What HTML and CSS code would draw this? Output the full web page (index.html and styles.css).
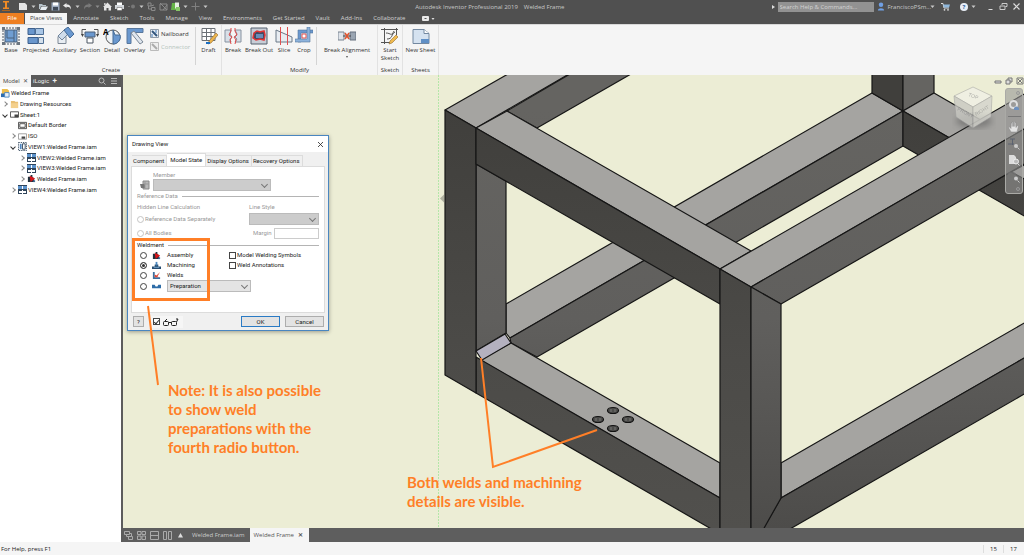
FILE: index.html
```html
<!DOCTYPE html>
<html lang="en">
<head>
    <meta charset="utf-8">
    <title>Autodesk Inventor Professional 2019 - Welded Frame</title>
    <link rel="stylesheet" href="styles.css">
</head>
<body>
    <!-- shared icons -->
    <svg class="defs" width="0" height="0">
        <symbol id="caret" viewBox="0 0 5 4"><path d="M0.5 0.5h4L2.5 3z" fill="#c8c8c8"/></symbol>
        <symbol id="views" viewBox="0 0 9 9">
            <path d="M0 0h4v4H0zM5 0h4v4H5z" fill="#5d93cc"/>
            <path d="M0 5h4v4H0zM5 5h4v4H5z" fill="#2f445a"/>
            <path d="M1 6h3v2H1zM5 6h3v2H5z" fill="#fff"/>
            <path d="M0 0h9v1H0zM0 4h9v1H0z" fill="#2f445a"/>
        </symbol>
        <symbol id="assembly" viewBox="0 0 10 10">
            <path d="M1 3h3V1h2v2l2 2v4H1z" fill="#22303c"/>
            <path d="M3 2l6 3-5 4z" fill="#d8161b"/>
            <path d="M7 7h2v2H7z" fill="#3f6f9d"/>
        </symbol>
    </svg>

    <header class="titlebar">
        <svg class="logo" viewBox="0 0 10 13"><path d="M2 1h6v1.500H6v5h2V9H2V7.500h2v-5H2z" fill="#f08a24"/><path d="M1 10.500h8" stroke="#a86220" stroke-width="1"/></svg>
        <div class="quick">
            <button aria-label="New"><svg viewBox="0 0 9 9"><path d="M0 1h6l2 2v5H0z" fill="#e4e4e4"/></svg></button>
            <svg class="caret"><use href="#caret"/></svg>
            <button aria-label="Open"><svg viewBox="0 0 9 9"><path d="M0 2h3l1 1h3v1H2L1 7H0z" fill="#b8c4cc"/><path d="M2.500 4.500H9L7 8H1z" fill="#e8eef2"/></svg></button>
            <button aria-label="Save"><svg viewBox="0 0 9 9"><path d="M0.500 0.500h8v8h-8z" fill="#9eacc0"/><path d="M2 0.500h5v3H2z" fill="#fff"/><path d="M2 5h5v3.500H2z" fill="#404a58"/></svg></button>
            <button aria-label="Undo"><svg viewBox="0 0 9 9"><path d="M0 3.500L3.500 1v1.500C7 2.500 8 4.500 8 7.500 7 5.500 6 4.800 3.500 4.800V6z" fill="#e8e8e8"/></svg></button>
            <svg class="caret"><use href="#caret"/></svg>
            <button aria-label="Redo"><svg viewBox="0 0 9 9"><path d="M9 3.500L5.500 1v1.500C2 2.500 1 4.500 1 7.500 2 5.500 3 4.800 5.500 4.800V6z" fill="#7a7a7a"/></svg></button>
            <svg class="caret dim"><use href="#caret"/></svg>
            <button aria-label="Home"><svg viewBox="0 0 9 9"><path d="M0 5l4.500-4.500L9 5H8v3.500H5.500V6h-2v2.500H1V5z" fill="#e4e4e4"/><path d="M1.200 1h1.300v2H1.200z" fill="#e4e4e4"/></svg></button>
            <button aria-label="Print"><svg viewBox="0 0 9 9"><path d="M2 0.500h5V3H2z" fill="#fff"/><path d="M0 3h9v4H0z" fill="#d4d8dc"/><path d="M2 5.500h5v3H2z" fill="#fff" stroke="#555" stroke-width=".5"/></svg></button>
            <button aria-label="Select"><svg viewBox="0 0 9 9"><circle cx="6" cy="4.500" r="2" fill="#777"/><path d="M1 4.500h2" stroke="#777"/></svg></button>
            <svg class="caret"><use href="#caret"/></svg>
            <button aria-label="Update"><svg viewBox="0 0 9 9" fill="none" stroke="#8a8a8a"><path d="M1 1h3v3H1zM4 4l3-1M4.500 5.500h3.500v3H4.500zM1.500 4v3h3"/></svg></button>
            <button aria-label="Update all"><svg viewBox="0 0 9 9" fill="none" stroke="#8a8a8a"><path d="M1 2h7v6H1zM1 1l7 7M8 3L4 8"/></svg></button>
            <button aria-label="Sheet"><svg viewBox="0 0 9 9"><path d="M1 1h5v7H0z" fill="#65b447"/><path d="M4 0.500h4v6H4z" fill="#e6efe2"/><path d="M5 5h4v4H5z" fill="#86c667"/></svg></button>
            <svg class="caret"><use href="#caret"/></svg>
            <button aria-label="Add"><svg viewBox="0 0 9 9"><path d="M4.500 0.500v8M0.500 4.500h8" stroke="#808080"/></svg></button>
            <svg class="caret"><use href="#caret"/></svg>
        </div>
        <div class="app-title"><span>Autodesk Inventor Professional 2019</span><span>Welded Frame</span></div>
        <div class="account">
            <svg class="play" viewBox="0 0 3 4"><path d="M0 0l3 2-3 2z" fill="#ddd"/></svg>
            <input class="help-search" type="text" placeholder="Search Help &amp; Commands..." aria-label="Search help and commands">
            <svg class="user" viewBox="0 0 9 10"><circle cx="4.500" cy="3" r="2.500" fill="#6f9fe4"/><path d="M1 9.500C1 6 8 6 8 9.500z" fill="#6f9fe4"/></svg>
            <span class="user-name">FranciscoPSm...</span>
            <svg class="caret"><use href="#caret"/></svg>
            <svg class="cart" viewBox="0 0 9 9"><path d="M0 1.500h2L3 6h5" fill="none" stroke="#ddd"/><path d="M2 2.500h7L8 5.500H3z" fill="#8fb8dc"/><circle cx="3.500" cy="7.800" r=".9" fill="#ddd"/><circle cx="7" cy="7.800" r=".9" fill="#ddd"/></svg>
            <span class="help-badge">?</span>
            <svg class="caret"><use href="#caret"/></svg>
        </div>
        <div class="win-buttons">
            <button aria-label="Minimize"><svg viewBox="0 0 9 9"><path d="M2.500 7.500h4" stroke="#ddd"/></svg></button>
            <button aria-label="Restore"><svg viewBox="0 0 9 9" fill="none" stroke="#ccc"><path d="M3 3V1.500h5v3H6.500M1 4h5v3.500H1z"/></svg></button>
            <button aria-label="Close"><svg viewBox="0 0 9 9"><path d="M1.500 1.500l6 6M7.500 1.500l-6 6" stroke="#ddd" stroke-width="1.200"/></svg></button>
        </div>
    </header>

    <nav class="ribbon-tabs">
        <button class="file">File</button>
        <button class="active">Place Views</button>
        <button>Annotate</button>
        <button>Sketch</button>
        <button>Tools</button>
        <button>Manage</button>
        <button>View</button>
        <button>Environments</button>
        <button>Get Started</button>
        <button>Vault</button>
        <button>Add-Ins</button>
        <button>Collaborate</button>
        <button class="toggle" aria-label="Ribbon display"><svg viewBox="0 0 13 5"><rect width="7" height="5" rx="1" fill="#e8e8e8"/><path d="M2.500 2.500h2" stroke="#555"/><path d="M9.500 2h3L11 4z" fill="#ddd"/></svg></button>
    </nav>

    <section class="ribbon">
        <div class="panel create">
            <div class="tools">
                <button class="tool w20"><svg viewBox="0 0 18 18"><path d="M1 1h16v16H1z" fill="none" stroke="#4c5560" stroke-dasharray="2 1"/><path d="M3 3h12v12H3z" fill="#6f9dd2" stroke="#4b617a"/><path d="M5 3v8h7v4M12 3v8" fill="none" stroke="#4b617a"/><path d="M0 0h3v3H0zM15 0h3v3h-3zM0 15h3v3H0zM15 15h3v3h-3z" fill="#6b7580"/></svg>Base</button>
                <button class="tool w30"><svg viewBox="0 0 18 18"><path d="M1 1.500h7v6H1z" fill="#6996cc" stroke="#3c5f8c"/><path d="M8.500 1.500h8v6h-8z" fill="#a9c6e6" stroke="#4f6f94"/><path d="M1 10.500h10v6H1z" fill="#6996cc" stroke="#3c5f8c"/><path d="M11.500 10.500h5v6h-5z" fill="#d4e0ec" stroke="#4f6f94"/></svg>Projected</button>
                <button class="tool w27"><svg viewBox="0 0 18 18"><path d="M2 9.500h8v7H2z" fill="#e8edf2" stroke="#7d8895"/><path d="M2 9l7-7 4 4-7 7z" fill="#cfdcea" stroke="#71859c"/><path d="M8 3l4-3 6 7-4 4z" fill="#6a98cf" stroke="#456b96"/></svg>Auxiliary</button>
                <button class="tool w24"><svg viewBox="0 0 18 18"><path d="M4 5h10v5H4z" fill="#6a98cf" stroke="#4a5f78"/><path d="M6 11h6v5H6z" fill="#fff" stroke="#4a5560"/><path d="M1 8V2.500h4M17 8V2.500h-4" fill="none" stroke="#555"/><path d="M0 7h3L1.500 10zM15 7h3l-1.500 3z" fill="#444"/></svg>Section</button>
                <button class="tool w20"><svg viewBox="0 0 18 18"><circle cx="10" cy="10" r="7" fill="#eef2f6" stroke="#555"/><path d="M10 3v14a7 7 0 0 0 7-9h-5z" fill="#6a98cf" stroke="#456b96"/><text class="icon-text" x="0" y="8">A</text></svg>Detail</button>
                <button class="tool w25"><svg viewBox="0 0 18 18"><path d="M1 1.500h16v4H5v11H1z" fill="#6a98cf" stroke="#58779c"/><path d="M5 6l3-2 9 11-3 2z" fill="#dfe6ee" stroke="#7a8796"/></svg>Overlay</button>
                <div class="small-tools">
                    <button><svg viewBox="0 0 9 9"><path d="M.5.5h8v8h-8z" fill="#e8eef4" stroke="#8e9aa8"/><path d="M2 2l5 5" stroke="#31547c" stroke-width="2"/><path d="M6 1v3M2 5v3" stroke="#4278b4"/></svg>Nailboard</button>
                    <button class="disabled"><svg viewBox="0 0 9 9"><path d="M.5.5h8v8h-8z" fill="#eee" stroke="#bbb"/><path d="M2 2l5 5" stroke="#aaa" stroke-width="2"/></svg>Connector</button>
                </div>
                <button class="tool w25 sep"><svg viewBox="0 0 18 18"><path d="M2 1.500h13v12H2zM2 5.500h13M2 9.500h13M6.500 1.500v12M11 1.500v12" fill="#fff" stroke="#6a6f75"/><path d="M9 14l7-8 2 2-7 8-3 1z" fill="#edb54c" stroke="#8d6730" stroke-width=".6"/><path d="M6 16h4" stroke="#1b6dc0" stroke-width="2"/></svg>Draft</button>
            </div>
            <div class="panel-name">Create</div>
        </div>
        <div class="panel">
            <div class="tools">
                <button class="tool w22"><svg viewBox="0 0 18 18"><path d="M1 3h6l-1 4 2 3-2 2 1 3H1zM17 3h-6l2 4-2 3 2 2-2 3h6z" fill="#d8e0e8" stroke="#8792a0"/><path d="M7 1v3L5 8l3 2-2 3 1 4M11 1v3l2 4-3 2 2 3-1 4" fill="none" stroke="#e04848"/></svg>Break</button>
                <button class="tool w30"><svg viewBox="0 0 18 18"><path d="M1 1h16v16H1z" fill="#c7cdd6" stroke="#55606e"/><path d="M4 6l3-2 3 1 4-1 1 4-1 5-4-1-4 1-3-2z" fill="#3c4c66" stroke="#e03434" stroke-width="1.500"/><path d="M6 7h7v4H6z" fill="#6a8db8"/></svg>Break Out</button>
                <button class="tool w20"><svg viewBox="0 0 18 18"><path d="M1 3l16 7v5H1z" fill="#e8edf2" stroke="#6b7888"/><path d="M5.500 0v18M12.500 0v18" stroke="#e05050"/></svg>Slice</button>
                <button class="tool w20"><svg viewBox="0 0 18 18"><path d="M3 3h15v3H6v9H3z" fill="#6a98cf" stroke="#55779c" stroke-width=".6"/><path d="M0 12h12V0h3v15H0z" fill="#8db3dc" stroke="#55779c" stroke-width=".6"/><path d="M7 7h4v4H7z" fill="#fff" stroke="#e05050"/></svg>Crop</button>
                <button class="tool align sep"><svg viewBox="0 0 18 18"><path d="M0 5h6v8H0z" fill="#dfe4ea" stroke="#7a8491"/><path d="M12 5h6v8h-6z" fill="#9aa5b2" stroke="#67717e"/><path d="M5 9h8" stroke="#444"/><path d="M7 6l4 6M11 6l-4 6" stroke="#e0532e" stroke-width="1.500"/></svg>Break Alignment<i class="drop"></i></button>
            </div>
            <div class="panel-name">Modify</div>
        </div>
        <div class="panel">
            <div class="tools">
                <button class="tool w24"><svg viewBox="0 0 18 18"><path d="M0 2.500h17M3.500 1v16M0 15.500h9M15.500 1v7" fill="none" stroke="#555"/><path d="M5 6c5 0 5 4 8-2M6 12c6 0 4-5 8-7" fill="none" stroke="#555"/><path d="M9 14l6-6 2 2-6 6-3 1z" fill="#f0bb50" stroke="#946c2e" stroke-width=".6"/></svg>Start<br>Sketch</button>
            </div>
            <div class="panel-name">Sketch</div>
        </div>
        <div class="panel">
            <div class="tools">
                <button class="tool sheet"><svg viewBox="0 0 18 18"><path d="M1 2.500h11l5 4v10H1z" fill="#d5e2f0" stroke="#7388a0"/><path d="M12 2.500v4h5" fill="#fff" stroke="#7388a0"/><path d="M9 12h8v4H9z" fill="#5f8fc6"/></svg>New Sheet</button>
            </div>
            <div class="panel-name">Sheets</div>
        </div>
    </section>

    <main class="workspace">
        <aside class="browser">
            <div class="browser-tabs">
                <button class="current">Model <span>✕</span></button>
                <button>iLogic <b>+</b></button>
                <div class="browser-actions">
                    <svg viewBox="0 0 8 8" fill="none" stroke="#bbb"><circle cx="3.500" cy="3.500" r="2.500"/><path d="M5.500 5.500L7.500 7.500"/></svg>
                    <svg viewBox="0 0 8 8" stroke="#bbb"><path d="M1 1.500h6M1 4h6M1 6.500h6"/></svg>
                </div>
            </div>
            <ul class="tree">
                <li class="l0"><svg viewBox="0 0 10 10"><path d="M1 0h6l2 2v4H1z" fill="#ecbd4e"/><path d="M0 5h5v4H0z" fill="#2c6cb0"/><path d="M4 4h5v5H4z" fill="#e8f0f8" stroke="#4a85bf"/></svg>Welded Frame</li>
                <li class="l1"><i class="closed"></i><svg viewBox="0 0 10 10"><path d="M1 1h4l1 1h3v7H1z" fill="#e8bf74"/><path d="M1 3.500h8V9H1z" fill="#f4d08c"/></svg>Drawing Resources</li>
                <li class="l1"><i class="open"></i><svg viewBox="0 0 10 10"><path d="M.5 2h9v6h-9z" fill="#fff" stroke="#444"/><path d="M5 5h4v3H5z" fill="#444"/></svg>Sheet:1</li>
                <li class="l2"><i></i><svg viewBox="0 0 10 10"><path d="M.5 1.500h9v7h-9z" fill="#fff" stroke="#444"/><path d="M2 3h6v4H2z" fill="none" stroke="#444"/></svg>Default Border</li>
                <li class="l2"><i class="closed"></i><svg viewBox="0 0 10 10"><path d="M.5 2h9v6h-9z" fill="#fff" stroke="#999"/><path d="M4 5h4v2.500H4z" fill="#444"/></svg>ISO</li>
                <li class="l2"><i class="open"></i><svg viewBox="0 0 10 10"><path d="M.5.5h9v9h-9z" fill="none" stroke="#33475c" stroke-dasharray="1.500 1"/><path d="M2 2h2v6H2z" fill="#4f86c0"/><path d="M5 2h3v6H5z" fill="#fff" stroke="#33475c"/></svg>VIEW1:Welded Frame.iam</li>
                <li class="l3"><i class="closed"></i><svg><use href="#views"/></svg>VIEW2:Welded Frame.iam</li>
                <li class="l3"><i class="closed"></i><svg><use href="#views"/></svg>VIEW3:Welded Frame.iam</li>
                <li class="l3"><i class="closed"></i><svg><use href="#assembly"/></svg>Welded Frame.iam</li>
                <li class="l2"><i class="closed"></i><svg><use href="#views"/></svg>VIEW4:Welded Frame.iam</li>
            </ul>
        </aside>

        <div class="document">
            <div class="canvas">
                <!-- welded frame, isometric view -->
                <svg class="drawing" viewBox="123 75 901 453" preserveAspectRatio="xMinYMin slice">
                    <defs>
                        <linearGradient id="left" gradientUnits="userSpaceOnUse" x1="0" y1="110" x2="0" y2="528"><stop offset="0" stop-color="#403f3c"/><stop offset=".6" stop-color="#4c4b48"/><stop offset="1" stop-color="#51504d"/></linearGradient>
                        <linearGradient id="right" gradientUnits="userSpaceOnUse" x1="0" y1="110" x2="0" y2="528"><stop offset="0" stop-color="#656461"/><stop offset=".5" stop-color="#605f5d"/><stop offset="1" stop-color="#4d4c4a"/></linearGradient>
                        <filter id="soft"><feGaussianBlur stdDeviation="3"/></filter>
                    </defs>
                    <path class="guide" d="M438.500 75V528"/>
                    <path d="M440 198.500l4-4v8z" fill="#b0b1a0"/>
                    <g class="faces">
                        <path class="lt" d="M506 304L872 93L903 111L510 338L506 333z"/>
                        <path class="rt" d="M510 338L903 111V146L537 357L511 343z"/>
                        <path class="lf" d="M872 74L903 74V111L872 93z"/>
                        <path class="rt" d="M903 74H934V93L903 111z"/>
                        <path class="lt" d="M903 111L934 93L1024 145V181L979 155z"/>
                        <path class="lf" d="M903 111L979 155V190L903 146z"/>
                        <path class="lt" d="M1011 172L1024 165H1026V180z"/>
                        <path class="lf" d="M979 190L1011 172L1026 180V217z"/>
                        <path class="lt" d="M445 110L508 74H569L476 128z"/>
                        <path class="rt" d="M507 111L570 74H631L537 128z"/>
                        <path class="lt" d="M781 463L1026 322V357L781 498z"/>
                        <path class="rt" d="M781 498L1026 357V393L790 529H763z"/>
                        <path class="rt" d="M476 164L506 181V333L476 351z"/>
                        <path class="lt" d="M480 360L511 343L720 463V498z"/>
                        <path class="lf" d="M476 357L720 498V534L476 393z"/>
                        <path class="lf" d="M445 110L476 128V393L445 375z"/>
                        <path class="lt" d="M476 128L507 111L751 251L720 269z"/>
                        <path class="lf" d="M476 128L720 269V304L476 164z"/>
                        <path class="lt" d="M720 269L1026 93V128L751 287z"/>
                        <path class="rt" d="M751 287L1026 128V163L781 304z"/>
                        <path class="lf" d="M720 269L751 287V530H720z"/>
                        <path class="rt" d="M751 287L781 304V498L763 530H751z"/>
                        <path d="M476 351L505 334L511 343L482 360z" fill="#b4b1bf"/>
                    </g>
                    <g class="hole">
                        <ellipse cx="613" cy="410.500" rx="5.500" ry="3"/>
                        <ellipse cx="598" cy="419.500" rx="5.500" ry="3"/>
                        <ellipse cx="628" cy="419.500" rx="5.500" ry="3"/>
                        <ellipse cx="613" cy="428.500" rx="5.500" ry="3"/>
                        <path d="M611 409v3M615 409v3M596 418v3M600 418v3M626 418v3M630 418v3M611 427v3M615 427v3" stroke="#8a8a88" stroke-width=".7"/>
                    </g>
                    <!-- view cube -->
                    <ellipse cx="974" cy="121" rx="18" ry="7" fill="#555" opacity=".5" filter="url(#soft)"/>
                    <g class="cube">
                        <path d="M954 96L973 87L992 96L973 107z" fill="#f0f0e6"/>
                        <path d="M954 96L973 107V128L956 117z" fill="#c8c8c2"/>
                        <path d="M973 107L992 96L991 117L973 128z" fill="#d4d4cd"/>
                        <text x="0" y="0" transform="translate(968 96) rotate(20)">TOP</text>
                        <text x="0" y="0" transform="translate(957 110) rotate(28)">FRONT</text>
                        <text x="0" y="0" transform="translate(976 116) rotate(-30)">RIGHT</text>
                    </g>
                </svg>

                <div class="doc-buttons">
                    <svg viewBox="0 0 8 8"><path d="M1 4h6v2H1z" fill="#ddd" stroke="#777"/></svg>
                    <svg viewBox="0 0 8 8" fill="#ddd" stroke="#777"><path d="M3 1h4v4H3z"/><path d="M1 3h4v4H1z"/></svg>
                    <svg viewBox="0 0 8 8" fill="none" stroke="#777"><path d="M1 1h6v6H1zM2 2l4 4M6 2L2 6"/></svg>
                </div>

                <div class="navbar">
                    <svg class="dot" viewBox="0 0 4 4"><circle cx="2" cy="2" r="1.500" fill="none" stroke="#999"/></svg>
                    <svg viewBox="0 0 12 12"><circle cx="5.500" cy="5.500" r="3.500" fill="none" stroke="#e0e0e0" stroke-width="2"/><path d="M6 9q2-3 5 0v2H6z" fill="#6e90bd"/></svg>
                    <hr>
                    <svg viewBox="0 0 12 12"><path d="M3 11L.5 6.500l1-.5L3 7.500V2h1.200v3.500V1h1.300v4.500V.5h1.300v5V1.500H8v5l1.500-2 1 .5L9 11z" fill="#e4e4e4" stroke="#888" stroke-width=".5"/></svg>
                    <svg viewBox="0 0 12 12"><path d="M2 1h5M4.500 1v6M0 6h6" stroke="#5c6370" fill="none"/><circle cx="8" cy="8" r="2" fill="#ccc"/><path d="M9.500 9.500l2 2" stroke="#ccc"/></svg>
                    <svg viewBox="0 0 12 12"><path d="M1 1h5l2 2v7H1z" fill="#ddd"/><circle cx="8" cy="7.500" r="2.500" fill="#bbb" stroke="#eee"/><path d="M9.500 9.500l2 2" stroke="#ddd"/></svg>
                    <svg viewBox="0 0 12 12"><path d="M1 2h6v6H1z" fill="none" stroke="#777"/><circle cx="8" cy="7.500" r="2" fill="#ccc"/><path d="M9.500 9.500l2 2" stroke="#ccc"/></svg>
                    <svg class="dot" viewBox="0 0 4 4"><circle cx="2" cy="2" r="1.500" fill="none" stroke="#999"/></svg>
                </div>

                <form class="dialog">
                    <div class="dialog-title">Drawing View<button type="button" aria-label="Close"><svg viewBox="0 0 7 7"><path d="M1 1l5 5M6 1L1 6" stroke="#222" stroke-width=".8"/></svg></button></div>
                    <div class="dialog-tabs">
                        <button type="button">Component</button>
                        <button type="button" class="active">Model State</button>
                        <button type="button">Display Options</button>
                        <button type="button">Recovery Options</button>
                    </div>
                    <div class="pane">
                        <div class="member">
                            <label for="member">Member</label>
                            <svg viewBox="0 0 10 10"><path d="M3 1h6v8H3z" fill="#b8b8b8" stroke="#888"/><path d="M0 4h5v4H1z" fill="#777"/><path d="M4 4h5M5 1v8" stroke="#999"/></svg>
                            <span class="combo"><select id="member" disabled><option></option></select></span>
                        </div>
                        <div class="group-name muted">Reference Data</div>
                        <div class="reference">
                            <span>Hidden Line Calculation</span>
                            <label for="style">Line Style</label>
                            <label><input type="radio" name="hidden" disabled>Reference Data Separately</label>
                            <span class="combo"><select id="style" disabled><option></option></select></span>
                            <label><input type="radio" name="hidden" disabled>All Bodies</label>
                            <span class="margin"><label for="margin">Margin</label><input id="margin" type="text" disabled></span>
                        </div>
                        <div class="group-name">Weldment</div>
                        <div class="weldment">
                            <div class="states">
                                <label><input type="radio" name="state"><svg><use href="#assembly"/></svg>Assembly</label>
                                <label><input type="radio" name="state" checked><svg viewBox="0 0 10 10"><path d="M0 6h3V4h4v2h3v3H0z" fill="#274c70"/><path d="M4 1h2v4H4z" fill="#4b86bd"/><path d="M2 7h6" stroke="#7eb0da"/></svg>Machining</label>
                                <label><input type="radio" name="state"><svg viewBox="0 0 10 10"><path d="M1 1h2v6h6v2H1z" fill="#3d6f9f"/><path d="M3 7V4l2 1 4-4-3 5 2 1z" fill="#e04432"/></svg>Welds</label>
                                <div class="prep">
                                    <input type="radio" name="state" aria-label="Preparation"><svg viewBox="0 0 10 10"><path d="M0 3h3l1 2h2l1-2h3v4H0z" fill="#2e6da8"/></svg>
                                    <span class="combo"><select aria-label="Weld state"><option>Preparation</option></select></span>
                                </div>
                            </div>
                            <div class="checks">
                                <label><input type="checkbox">Model Welding Symbols</label>
                                <label><input type="checkbox">Weld Annotations</label>
                            </div>
                        </div>
                    </div>
                    <div class="dialog-foot">
                        <button type="button" class="help">?</button>
                        <label class="preview"><input type="checkbox" checked aria-label="Preview"><svg viewBox="0 0 16 8" fill="none" stroke="#222"><rect x=".5" y="3.500" width="5" height="4" rx="1"/><rect x="8.500" y="3.500" width="5" height="4" rx="1"/><path d="M5.500 4.500h3M2 3l2-2M13.500 4l1.500-3h-2"/></svg></label>
                        <button type="button" class="ok">OK</button>
                        <button type="button">Cancel</button>
                    </div>
                </form>

                <!-- callouts, drawn over the dialog and the frame -->
                <svg class="drawing callouts" viewBox="123 75 901 453" preserveAspectRatio="xMinYMin slice">
                    <rect x="133.500" y="239.500" width="75" height="60" stroke-width="3"/>
                    <path d="M148 306L158 385"/>
                    <path d="M481 358L493 467L597 430"/>
                </svg>
                <p class="note prep-note">Note: It is also possible<br>to show weld<br>preparations with the<br>fourth radio button.</p>
                <p class="note weld-note">Both welds and machining<br>details are visible.</p>
            </div>

            <div class="doc-tabs">
                <svg viewBox="0 0 9 9" fill="none" stroke="#aaa"><path d="M.5.500h5v3h-5zM2.500 3.500v2h5v-3h-2M4.500 5.500v3h4v-3h-1"/></svg>
                <svg viewBox="0 0 9 9" fill="none" stroke="#aaa"><path d="M.5.500h3.500v3H.5zM5 .5h3.500v3H5zM.5 5H4v3.500H.5zM5 5h3.500v3.500H5z"/></svg>
                <svg viewBox="0 0 9 9" fill="none" stroke="#aaa"><path d="M.5.500h8v8h-8zM.5 4.500h8"/></svg>
                <svg viewBox="0 0 9 9" fill="none" stroke="#aaa"><path d="M.5.500h3v8h-3zM5.500.5h3v8h-3z"/></svg>
                <svg viewBox="0 0 9 9"><path d="M2 6.500h5L4.500 2z" fill="#ddd"/></svg>
                <div class="docs">
                    <button>Welded Frame.iam</button>
                    <button class="active">Welded Frame <b>✕</b></button>
                </div>
            </div>
        </div>
    </main>

    <footer class="status">
        <span class="hint">For Help, press F1</span>
        <span class="count">15</span>
        <span class="count">17</span>
    </footer>
</body>
</html>
```

FILE: styles.css
```css
* {
    box-sizing: border-box;
}

body {
    margin: 0;
    height: 100vh;
    display: flex;
    flex-direction: column;
    overflow: hidden;
    font-family: "Open Sans", sans-serif;
    font-size: 6px;
    line-height: 8px;
    color: #333;
    background: #f5f5f5;
}

button {
    padding: 0;
    border: none;
    background: none;
    color: inherit;
    font: inherit;
}

svg {
    display: block;
    flex: none;
}

.defs {
    position: absolute;
}

/* title bar */
.titlebar {
    display: flex;
    align-items: center;
    height: 13px;
    background: #505050;
    color: #c8c8c8;
}

.logo {
    width: 10px;
    height: 13px;
    margin: 0 8px 0 1px;
}

.quick {
    display: flex;
    align-items: center;
    gap: 3px;
}

.quick svg,
.win-buttons svg,
.cart {
    width: 9px;
    height: 9px;
}

.quick .caret,
.account .caret {
    width: 5px;
    height: 4px;
}

.dim {
    opacity: 0.5;
}

.app-title {
    flex: 1;
    display: flex;
    justify-content: center;
    gap: 6px;
}

.account {
    display: flex;
    align-items: center;
    gap: 3px;
}

.play {
    width: 3px;
    height: 4px;
}

.help-search {
    width: 96px;
    height: 10px;
    padding: 0 2px;
    border: none;
    background: #929292;
    font: inherit;
}

.help-search::placeholder {
    color: #d2d2d2;
}

.user {
    width: 8px;
    height: 9px;
}

.user-name {
    margin-right: -4px;
}

.cart {
    margin-left: 3px;
}

.help-badge {
    width: 8px;
    margin-left: 7px;
    border-radius: 4px;
    background: #e8eef6;
    color: #2d5f9e;
    font-weight: bold;
    text-align: center;
}

.win-buttons {
    display: flex;
    gap: 4px;
    margin: 0 3px 0 10px;
}

/* ribbon */
.ribbon-tabs {
    display: flex;
    height: 11px;
    gap: 1px;
    background: #505050;
    color: #d0d0d0;
}

.ribbon-tabs button {
    padding: 0 5px;
    line-height: 11px;
}

.ribbon-tabs .file {
    width: 24px;
    background: #ee7f22;
    color: #fff;
}

.ribbon-tabs .active {
    background: #f5f5f5;
    color: #444;
}

.ribbon-tabs .toggle {
    padding-left: 11px;
}

.toggle svg {
    width: 13px;
    height: 5px;
}

.ribbon {
    display: flex;
    height: 51px;
    border-top: 1px solid #d8d8d8;
    background: #f5f5f5;
}

.panel {
    display: flex;
    flex-direction: column;
    justify-content: space-between;
    padding: 2px 0 1px;
    border-right: 1px solid #e2e2e2;
}

.create {
    padding-left: 1px;
}

.tools {
    display: flex;
}

.tool {
    display: flex;
    flex-direction: column;
    align-items: center;
    justify-content: flex-start;
    white-space: nowrap;
}

.tool svg {
    width: 18px;
    height: 18px;
    margin-bottom: 1px;
}

.icon-text {
    font: bold 8px "Open Sans", sans-serif;
}

.w20 { width: 20px; }
.w22 { width: 22px; }
.w24 { width: 24px; }
.w25 { width: 25px; }
.w27 { width: 27px; }
.w30 { width: 30px; }

.tool.sep {
    height: 38px;
    box-shadow: -1px 0 #d4d4d4;
}

.tool.align {
    width: 60px;
    margin-left: 3px;
}

.tool.sheet {
    width: 35px;
}

.drop {
    margin-top: 2px;
    border: 1px solid transparent;
    border-top: 2px solid #555;
}

.small-tools {
    width: 49px;
    padding-left: 3px;
}

.small-tools button {
    display: flex;
    align-items: center;
    gap: 2px;
    height: 13px;
}

.small-tools svg {
    width: 9px;
    height: 9px;
}

.disabled {
    color: #b4c4bc;
}

.panel-name {
    text-align: center;
}

/* model browser */
.workspace {
    flex: 1;
    min-height: 0;
    display: flex;
    font-family: Roboto, sans-serif;
}

.browser {
    width: 123px;
    flex: none;
    background: #fff;
    border-right: 2px solid #5c5c5c;
}

.browser-tabs {
    display: flex;
    height: 12px;
    background: #5a5a5a;
    color: #eee;
}

.browser-tabs button {
    padding: 0 2px;
}

.browser-tabs .current {
    width: 31px;
    background: #f5f5f5;
    color: #555;
}

.browser-tabs span {
    margin-left: 2px;
}

.browser-tabs b {
    margin-left: 2px;
    font-size: 8px;
}

.browser-actions {
    display: flex;
    align-items: center;
    gap: 4px;
    margin: 0 3px 0 auto;
}

.browser-actions svg {
    width: 8px;
    height: 8px;
}

.tree {
    display: grid;
    grid-auto-rows: 1fr;
    height: 107px;
    margin: 1px 0 0;
    padding: 0;
    list-style: none;
    color: #222;
}

.tree li {
    display: flex;
    align-items: center;
    white-space: nowrap;
}

.tree svg {
    width: 9px;
    height: 9px;
    margin-right: 1px;
}

.tree i {
    width: 8px;
    flex: none;
}

.tree i::before {
    content: "";
    display: block;
    width: 3px;
    height: 3px;
    margin-left: 1px;
}

.tree .closed::before {
    border: solid #888;
    border-width: 1px 1px 0 0;
    transform: rotate(45deg);
}

.tree .open::before {
    border: solid #333;
    border-width: 0 1px 1px 0;
    transform: rotate(45deg);
}

.l0 { padding-left: 1px; }
.l1 { padding-left: 2px; }
.l2 { padding-left: 10px; }
.l3 { padding-left: 19px; }

/* drawing area */
.document {
    flex: 1;
    min-width: 0;
    display: flex;
    flex-direction: column;
}

.canvas {
    position: relative;
    flex: 1;
    min-height: 0;
    background: #ecedd5;
}

.drawing {
    width: 100%;
    height: 100%;
}

.guide {
    stroke: #b4e6a8;
    stroke-dasharray: 2 1;
}

.faces {
    stroke: #161616;
    stroke-width: 1.2px;
    stroke-linejoin: round;
}

.lt { fill: #a5a4a1; }
.lf { fill: url(#left); }
.rt { fill: url(#right); }

.hole {
    fill: #4c4c4a;
    stroke: #111;
    stroke-width: 1.2px;
}

.cube {
    opacity: 0.8;
    stroke: #999;
    stroke-width: 0.6px;
}

.cube text {
    font: 5px "Liberation Sans", sans-serif;
    fill: #999;
    stroke: none;
}

.callouts {
    position: absolute;
    inset: 0;
    pointer-events: none;
    fill: none;
    stroke: #ff7f27;
    stroke-width: 2px;
}

.doc-buttons {
    position: absolute;
    top: 2px;
    right: 0;
    display: flex;
    gap: 3px;
}

.doc-buttons svg {
    width: 8px;
    height: 8px;
}

.navbar {
    position: absolute;
    top: 13px;
    right: 1px;
    width: 18px;
    height: 106px;
    padding: 2px;
    display: flex;
    flex-direction: column;
    align-items: center;
    justify-content: space-between;
    border: 1px solid #aaaaa6;
    border-radius: 3px;
    background: rgba(150, 150, 148, 0.6);
}

.navbar svg {
    width: 12px;
    height: 12px;
}

.navbar .dot {
    width: 4px;
    height: 4px;
    align-self: flex-end;
}

.navbar hr {
    width: 13px;
    margin: 0;
    border: none;
    border-top: 1px solid #777;
}

.note {
    position: absolute;
    margin: 0;
    color: #ff7f27;
    font: bold 15px/19px Lato, sans-serif;
    white-space: nowrap;
}

.prep-note {
    left: 45px;
    top: 306px;
}

.weld-note {
    left: 284px;
    top: 398px;
}

/* drawing view dialog */
.dialog {
    position: absolute;
    left: 4px;
    top: 60px;
    width: 202px;
    border: 1px solid #4a86c0;
    background: #f0f0f0;
    color: #222;
    box-shadow: 0 1px 4px rgba(0, 0, 0, 0.35);
}

.dialog-title {
    display: flex;
    justify-content: space-between;
    align-items: center;
    height: 16px;
    padding: 0 4px;
    background: #fff;
}

.dialog-title svg {
    width: 7px;
    height: 7px;
}

.dialog-tabs {
    display: flex;
    align-items: flex-end;
    height: 14px;
    padding-left: 4px;
}

.dialog-tabs button {
    height: 11px;
    padding: 0 2px 0 1px;
    border: 1px solid #dcdcdc;
    border-width: 1px 1px 0 0;
    white-space: nowrap;
}

.dialog-tabs .active {
    height: 13px;
    padding: 0 3px;
    background: #fff;
}

.pane {
    height: 147px;
    margin: 0 3px;
    padding: 4px 5px;
    border: 1px solid #dcdcdc;
    background: #fff;
}

.member {
    display: grid;
    grid-template-columns: 16px 118px;
    align-items: center;
    color: #999;
}

.member label {
    grid-column: 2;
}

.member svg {
    width: 10px;
    height: 10px;
    justify-self: center;
}

.combo {
    position: relative;
    display: block;
    height: 12px;
}

.combo::after {
    content: "";
    position: absolute;
    right: 4px;
    top: 3px;
    width: 4px;
    height: 4px;
    border: solid #777;
    border-width: 0 1px 1px 0;
    transform: rotate(45deg);
}

.combo select {
    display: block;
    width: 100%;
    height: 100%;
    padding: 0 2px;
    border: 1px solid #bbb;
    border-radius: 0;
    background: #e4e4e4;
    color: #222;
    font: inherit;
    appearance: none;
}

.combo select:disabled {
    background: #ccc;
    opacity: 1;
}

.group-name {
    display: flex;
    align-items: center;
    gap: 4px;
    height: 10px;
}

.group-name::after {
    content: "";
    flex: 1;
    border-top: 1px solid #b4b4b4;
}

.muted,
.reference {
    color: #999;
}

.reference {
    display: grid;
    grid-template-columns: 112px 1fr;
    grid-template-rows: 11px 14px 14px;
    align-items: center;
}

.dialog input[type="radio"],
.dialog input[type="checkbox"] {
    appearance: none;
    flex: none;
    width: 7px;
    height: 7px;
    margin: 0;
    border: 1px solid #444;
    background: #fff;
}

.dialog input[type="radio"] {
    border-radius: 50%;
}

.dialog .states input:checked {
    box-shadow: inset 0 0 0 1px #fff;
    background: #333;
}

.reference label,
.states label,
.checks label,
.prep {
    display: flex;
    align-items: center;
    gap: 1px;
}

.dialog .reference input[type="radio"] {
    border-color: #c4c4c4;
}

.margin {
    display: flex;
    justify-content: space-between;
    padding-left: 4px;
}

.margin input {
    width: 45px;
    height: 11px;
    border: 1px solid #ccc;
    background: #fff;
}

.weldment {
    display: grid;
    grid-template-columns: 92px 1fr;
}

.states {
    padding-left: 3px;
}

.states label,
.checks label {
    height: 10px;
    white-space: nowrap;
}

.prep {
    height: 12px;
}

.states svg {
    width: 9px;
    height: 9px;
    margin: 0 5px 0 4px;
}

.prep .combo {
    width: 84px;
    flex: none;
}

.dialog-foot {
    display: flex;
    align-items: center;
    gap: 5px;
    height: 17px;
    padding: 0 4px 0 5px;
}

.dialog-foot button {
    width: 39px;
    height: 11px;
    border: 1px solid #adadad;
    background: #e3e3e3;
}

.dialog-foot .help {
    width: 11px;
}

.dialog-foot .ok {
    margin-left: auto;
    border-color: #2a7ac4;
}

.preview {
    display: flex;
    align-items: center;
    gap: 3px;
    padding: 2px 4px;
    background: #f6f6f6;
}

.preview input::after {
    content: "";
    display: block;
    width: 2px;
    height: 4px;
    margin: 0 auto;
    border: solid #333;
    border-width: 0 1px 1px 0;
    transform: rotate(40deg);
}

.preview svg {
    width: 16px;
    height: 8px;
}

/* document tabs and status bar */
.doc-tabs {
    display: flex;
    align-items: center;
    gap: 4px;
    height: 14px;
    padding-left: 1px;
    background: #5e5e5e;
    color: #ccc;
    font-family: "Open Sans", sans-serif;
}

.doc-tabs svg {
    width: 9px;
    height: 9px;
}

.docs {
    display: flex;
}

.docs button {
    height: 14px;
    padding: 0 6px 0 3px;
}

.docs .active {
    background: #f5f5f5;
    color: #555;
}

.docs b {
    margin-left: 2px;
}

.status {
    display: flex;
    align-items: center;
    height: 13px;
    padding: 0 1px;
    color: #222;
}

.hint {
    flex: 1;
}

.count {
    width: 20px;
    border-left: 1px solid #ddd;
    text-align: center;
}
```
